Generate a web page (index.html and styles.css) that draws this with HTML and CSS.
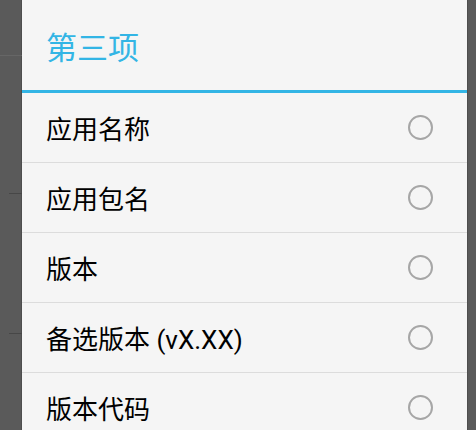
FILE: index.html
```html
<!DOCTYPE html>
<html lang="zh">
<head>
<meta charset="utf-8">
<link rel="stylesheet" href="styles.css">
</head>
<body>
<div class="screen">
  <div class="side side-left">
    <div class="gap g1"></div>
    <div class="mark light"></div>
    <div class="gap g2"></div>
    <div class="mark dark"></div>
    <div class="gap g3"></div>
    <div class="mark dark"></div>
  </div>
  <div class="dialog">
    <div class="title">第三项</div>
    <div class="rule"></div>
    <ul class="list">
      <li class="item"><span class="label">应用名称</span><span class="radio"></span></li>
      <li class="item"><span class="label">应用包名</span><span class="radio"></span></li>
      <li class="item"><span class="label">版本</span><span class="radio"></span></li>
      <li class="item"><span class="label">备选版本 (vX.XX)</span><span class="radio"></span></li>
      <li class="item"><span class="label">版本代码</span><span class="radio"></span></li>
    </ul>
  </div>
  <div class="side side-right"></div>
</div>
</body>
</html>
```
FILE: styles.css
```css
html, body {
  margin: 0;
  padding: 0;
  background: #5a5a5a;
  overflow: hidden;
}
.screen {
  display: flex;
  width: 476px;
  height: 430px;
  overflow: hidden;
  font-family: Roboto, "Noto Sans CJK SC", sans-serif;
}
.side {
  background: #5a5a5a;
  flex: none;
}
.side-left {
  width: 22px;
  display: flex;
  flex-direction: column;
  align-items: flex-end;
  box-shadow: inset -1px 0 0 #4e4e4e;
}
.gap, .mark { flex: none; }
.g1 { height: 55px; }
.g2 { height: 137px; }
.g3 { height: 139px; }
.mark { height: 1px; }
.mark.light { width: 22px; background: #666666; }
.mark.dark { width: 13px; background: #474747; }
.side-right {
  width: 9px;
  box-shadow: inset 1px 0 0 #4e4e4e;
}
.dialog {
  width: 445px;
  flex: none;
  background: #f5f5f5;
  display: flex;
  flex-direction: column;
}
.title {
  flex: none;
  height: 90px;
  display: flex;
  align-items: center;
  padding-left: 24px;
  font-size: 31px;
  color: #33b5e5;
}
.rule {
  flex: none;
  height: 3px;
  background: #33b5e5;
}
.list {
  flex: none;
  list-style: none;
  margin: 0;
  padding: 0;
}
.item {
  height: 69px;
  border-bottom: 1px solid #dcdcdc;
  display: flex;
  align-items: center;
  justify-content: space-between;
  padding: 0 34px 0 24px;
}
.label {
  font-size: 26px;
  color: #000000;
}
.radio {
  width: 21px;
  height: 21px;
  border: 2px solid #a6a6a6;
  border-radius: 50%;
  flex: none;
}
```
